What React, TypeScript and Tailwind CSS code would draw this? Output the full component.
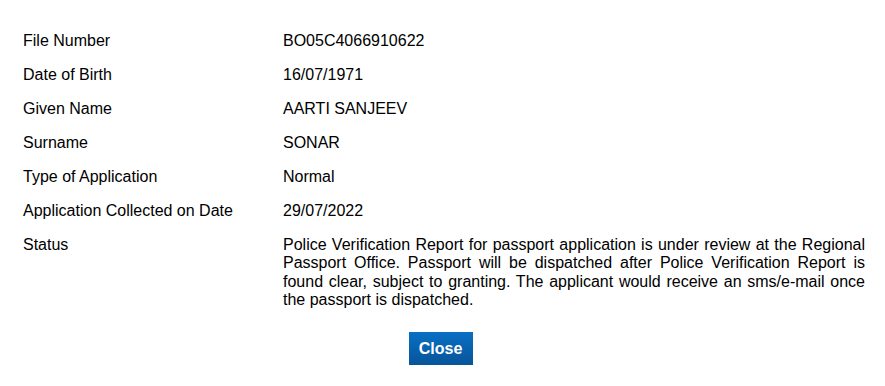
export default function App() {
  const rows: [string, string][] = [
    ["File Number", "BO05C4066910622"],
    ["Date of Birth", "16/07/1971"],
    ["Given Name", "AARTI SANJEEV"],
    ["Surname", "SONAR"],
    ["Type of Application", "Normal"],
    ["Application Collected on Date", "29/07/2022"],
  ];

  return (
    <div
      className="min-h-screen bg-white text-black text-[16px] leading-[18.4px]"
      style={{ fontFamily: '"Liberation Sans", Arial, sans-serif' }}
    >
      <div className="pt-[24px] pl-[23px] pr-[20px]">
        {rows.map(([label, value]) => (
          <div key={label} className="flex pt-[8px] pb-[7.6px]">
            <div className="w-[260px] shrink-0">{label}</div>
            <div>{value}</div>
          </div>
        ))}
        <div className="flex pt-[8px] pb-[7.6px]">
          <div className="w-[260px] shrink-0">Status</div>
          <div className="w-[582px] text-justify">
            Police Verification Report for passport application is under review
            at the Regional Passport Office. Passport will be dispatched after
            Police Verification Report is found clear, subject to granting. The
            applicant would receive an sms/e-mail once the passport is
            dispatched.
          </div>
        </div>
      </div>
      <div className="flex justify-center mt-[15px] pr-[4px]">
        <button className="w-[64px] h-[33px] bg-gradient-to-b from-[#0a6fc4] to-[#07559a] text-white font-bold text-[16px]">
          Close
        </button>
      </div>
    </div>
  );
}
